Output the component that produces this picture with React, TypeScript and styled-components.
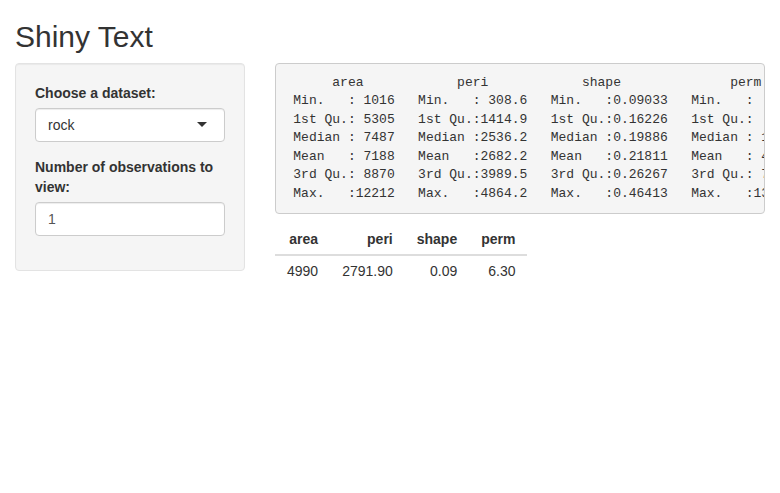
import styled, { createGlobalStyle } from 'styled-components'

const summaryText = `      area            peri            shape              perm        
 Min.   : 1016   Min.   : 308.6   Min.   :0.09033   Min.   :   6.30  
 1st Qu.: 5305   1st Qu.:1414.9   1st Qu.:0.16226   1st Qu.:  76.45  
 Median : 7487   Median :2536.2   Median :0.19886   Median : 130.50  
 Mean   : 7188   Mean   :2682.2   Mean   :0.21811   Mean   : 415.45  
 3rd Qu.: 8870   3rd Qu.:3989.5   3rd Qu.:0.26267   3rd Qu.: 777.50  
 Max.   :12212   Max.   :4864.2   Max.   :0.46413   Max.   :1300.00  `

const columns = ['area', 'peri', 'shape', 'perm']
const rows = [['4990', '2791.90', '0.09', '6.30']]

const App = () => {
  return (
    <>
      <GlobalStyle />
      <Page>
        <Title>Shiny Text</Title>
        <Row>
          <Sidebar>
            <Well>
              <FormGroup>
                <Label>Choose a dataset:</Label>
                <SelectBox>rock</SelectBox>
              </FormGroup>
              <FormGroup>
                <Label htmlFor="obs">Number of observations to view:</Label>
                <NumberInput id="obs" type="number" defaultValue={1} />
              </FormGroup>
            </Well>
          </Sidebar>

          <Main>
            <Verbatim>{summaryText}</Verbatim>
            <Table>
              <thead>
                <tr>
                  {columns.map((c) => (
                    <Th key={c}>{c}</Th>
                  ))}
                </tr>
              </thead>
              <tbody>
                {rows.map((r, i) => (
                  <tr key={i}>
                    {r.map((v, j) => (
                      <Td key={j}>{v}</Td>
                    ))}
                  </tr>
                ))}
              </tbody>
            </Table>
          </Main>
        </Row>
      </Page>
    </>
  )
}

const GlobalStyle = createGlobalStyle`
  * { box-sizing: border-box; }
  body {
    margin: 0;
    background: #fff;
    color: #333;
    font-family: "Liberation Sans", Helvetica, Arial, sans-serif;
    font-size: 14px;
    line-height: 1.42857143;
  }
`

const Page = styled.div`
  padding: 0 15px;
`

const Title = styled.h2`
  margin: 20px 0 10px;
  font-size: 30px;
  font-weight: 500;
  line-height: 1.1;
  color: #333;
`

const Row = styled.div`
  display: flex;
  margin: 0 -15px;
`

const Sidebar = styled.div`
  flex: 0 0 33.3333%;
  padding: 0 15px;
  min-width: 0;
`

const Main = styled.div`
  flex: 0 0 66.6667%;
  padding: 0 15px;
  min-width: 0;
`

const Well = styled.div`
  min-height: 20px;
  padding: 19px;
  margin-bottom: 20px;
  background: #f5f5f5;
  border: 1px solid #e3e3e3;
  border-radius: 4px;
  box-shadow: inset 0 1px 1px rgba(0, 0, 0, 0.05);
`

const FormGroup = styled.div`
  margin-bottom: 15px;
`

const Label = styled.label`
  display: inline-block;
  max-width: 100%;
  margin-bottom: 5px;
  font-weight: 700;
`

const controlStyles = `
  display: block;
  width: 100%;
  height: 34px;
  padding: 6px 12px;
  font-family: inherit;
  font-size: 14px;
  line-height: 1.42857143;
  background: #fff;
  border: 1px solid #ccc;
  border-radius: 4px;
  box-shadow: inset 0 1px 1px rgba(0, 0, 0, 0.075);
`

const SelectBox = styled.div`
  ${controlStyles}
  position: relative;
  color: #333;

  &::after {
    content: '';
    position: absolute;
    top: 50%;
    right: 17px;
    margin-top: -3px;
    border-style: solid;
    border-width: 5px 5px 0 5px;
    border-color: #333 transparent transparent transparent;
  }
`

const NumberInput = styled.input`
  ${controlStyles}
  color: #555;
  outline: none;
  -moz-appearance: textfield;

  &::-webkit-inner-spin-button,
  &::-webkit-outer-spin-button {
    -webkit-appearance: none;
    margin: 0;
  }
`

const Verbatim = styled.pre`
  margin: 0 0 10px;
  padding: 9.5px;
  font-family: "Liberation Mono", Menlo, Consolas, "Courier New", monospace;
  font-size: 13px;
  line-height: 1.42857143;
  color: #333;
  background: #f5f5f5;
  border: 1px solid #ccc;
  border-radius: 4px;
  white-space: pre;
  overflow: hidden;
`

const Table = styled.table`
  width: auto;
  margin-bottom: 20px;
  border-collapse: collapse;
  border-spacing: 0;
`

const Th = styled.th`
  padding: 5px 12px;
  text-align: right;
  font-weight: 700;
  vertical-align: bottom;
  border-bottom: 2px solid #ddd;
`

const Td = styled.td`
  padding: 5px 12px;
  text-align: right;
  vertical-align: top;
  border-top: 1px solid #ddd;
`

export default App
